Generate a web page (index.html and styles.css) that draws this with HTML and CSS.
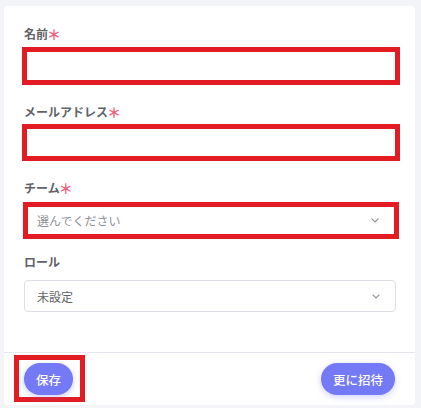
FILE: index.html
```html
<!DOCTYPE html>
<html lang="ja">
<head>
<meta charset="utf-8">
<link rel="stylesheet" href="styles.css">
</head>
<body>
<div class="card">
  <div class="form">
    <div class="field field-name">
      <div class="label">名前<span class="req">＊</span></div>
      <div class="mark mark-name"><div class="blank"></div></div>
    </div>
    <div class="field field-mail">
      <div class="label">メールアドレス<span class="req">＊</span></div>
      <div class="mark mark-mail"><div class="blank"></div></div>
    </div>
    <div class="field field-team">
      <div class="label">チーム<span class="req">＊</span></div>
      <div class="mark mark-team">
        <div class="select select-bare">
          <span class="placeholder">選んでください</span>
          <svg class="chev" width="8" height="5" viewBox="0 0 8 5"><path d="M0.6 0.6 L4 4 L7.4 0.6" fill="none" stroke="#909399" stroke-width="1.2"/></svg>
        </div>
      </div>
    </div>
    <div class="field field-role">
      <div class="label">ロール</div>
      <div class="select select-boxed">
        <span class="value">未設定</span>
        <svg class="chev" width="8" height="5" viewBox="0 0 8 5"><path d="M0.6 0.6 L4 4 L7.4 0.6" fill="none" stroke="#909399" stroke-width="1.2"/></svg>
      </div>
    </div>
  </div>
  <div class="footer">
    <div class="mark-btn"><button class="btn">保存</button></div>
    <button class="btn btn-right">更に招待</button>
  </div>
</div>
</body>
</html>
```

FILE: styles.css
```css
* { box-sizing: border-box; }
html, body { height: 100%; }
body {
  margin: 0;
  padding: 6px 6px 0 4px;
  background: #f3f4f8;
  font-family: "Noto Sans CJK JP", "Noto Sans", sans-serif;
}
.card {
  background: #ffffff;
  border-radius: 4px;
  width: 411px;
  height: 399px;
  display: flex;
  flex-direction: column;
}
.form {
  padding: 18px 20px 0 20px;
  height: 346px;
}
.label {
  font-size: 12px;
  line-height: 20px;
  height: 20px;
  font-weight: 700;
  color: #606266;
  display: flex;
  align-items: center;
}
.req {
  color: #f2607f;
  font-weight: 700;
  font-size: 14px;
  line-height: 20px;
  margin-left: -1px;
}
.mark {
  border: 5px solid #e31c23;
  margin-left: -2px;
  margin-right: -5px;
}
.field-name .label { margin-bottom: 3px; }
.mark-name { height: 38px; }
.field-name { margin-bottom: 17px; }
.field-mail .label { margin-bottom: 2px; }
.mark-mail { height: 37px; }
.field-mail { margin-bottom: 17px; }
.field-team .label { margin-bottom: 4px; }
.mark-team { height: 37px; margin-left: -1px; margin-right: -4px; }
.field-team { margin-bottom: 13px; }
.field-role .label { margin-bottom: 8px; }
.blank { height: 100%; background: #fff; }
.select {
  display: flex;
  align-items: center;
  justify-content: space-between;
  font-size: 12px;
}
.select-bare {
  height: 100%;
  padding: 0 15px 0 9px;
}
.select-boxed {
  height: 32px;
  border: 1px solid #dcdfe6;
  border-radius: 4px;
  padding: 0 15px 0 12px;
  margin-right: -1px;
}
.placeholder { color: #8e9095; }
.value { color: #606266; }
.chev { display: block; }
.footer {
  border-top: 1px solid #e4e7ed;
  padding: 2px 20px 3px 10px;
  display: flex;
  justify-content: space-between;
  align-items: flex-start;
  flex: 1;
}
.mark-btn {
  border: 5px solid #e31c23;
  padding: 3px 7px 2px 5px;
}
.btn {
  font-family: "Noto Sans CJK JP", "Noto Sans", sans-serif;
  font-size: 12.5px;
  font-weight: 500;
  color: #ffffff;
  background: #7479f5;
  border: none;
  border-radius: 16px;
  height: 32px;
  padding: 0 12px;
  box-shadow: 0 2px 6px rgba(116, 121, 245, 0.35);
  display: block;
}
.btn-right { margin-top: 8px; }
```
